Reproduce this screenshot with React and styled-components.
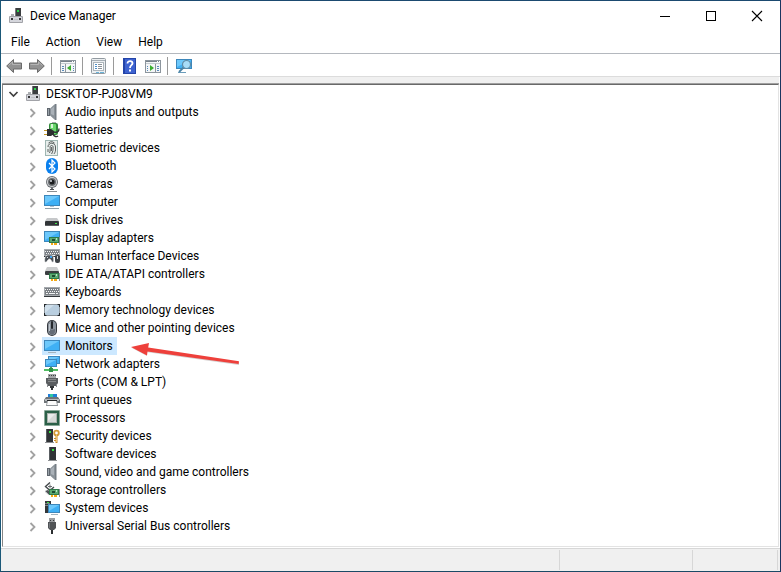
import React from 'react';
import styled, { createGlobalStyle } from 'styled-components';

const GlobalStyle = createGlobalStyle`
  * {
    box-sizing: border-box;
  }
  body {
    margin: 0;
    background: #fff;
  }
  body, button {
    font-family: Roboto, 'Open Sans', sans-serif;
    font-size: 12px;
    line-height: 18px;
    color: #000;
  }
`;

const Svg = ({ children, ...rest }) => (
  <svg width="16" height="16" viewBox="0 0 16 16" aria-hidden="true" {...rest}>
    {children}
  </svg>
);

/* shared pieces of the device icons */
const Screen = ({ x = 0, y = 2, w = 16, h = 11 }) => (
  <g>
    <rect x={x} y={y} width={w} height={h} fill="#3d87bb" />
    <rect x={x + 1} y={y + 1} width={w - 2} height={h - 2} fill="#3fb0f5" />
    <path d={`M${x + 1} ${y + 1}h${w - 2}L${x + 1} ${y + h - 2}z`} fill="#6cc8fb" />
  </g>
);

const Card = ({ x = 5, y = 7 }) => (
  <g>
    <rect x={x} y={y} width="10" height="6" fill="#2f7a49" />
    <rect x={x + 1} y={y + 1} width="8" height="4" fill="#5aa871" />
    <rect x={x + 3} y={y + 2} width="3" height="2" fill="#1c4d30" />
    <rect x={x + 7} y={y + 1} width="1" height="2" fill="#b9e6c4" />
    <rect x={x + 10} y={y} width="1" height="8" fill="#8b9298" />
    <path d={`M${x + 2} ${y + 6}h2v2h-2zM${x + 5} ${y + 6}h3v2h-3z`} fill="#f3a916" />
  </g>
);

const Keys = ({ y = 3, h = 9 }) => (
  <g>
    <rect x="0" y={y} width="16" height={h} fill="#a5a9ad" />
    <rect x="1" y={y + 1} width="14" height={h - 3} fill="#7b8085" />
    <path d={`M1 ${y + 2.5}h14M2 ${y + 4.5}h13`} stroke="#f2f3f4" strokeDasharray="1 1" />
    <path d={`M2 ${y + 6.5}h2m1 0h6m1 0h2`} stroke="#f2f3f4" />
    <rect x="0" y={y + h - 1} width="16" height="1" fill="#34383c" />
  </g>
);

const Tower = ({ x = 5, y = 1, w = 7, h = 13 }) => (
  <g>
    <rect x={x} y={y} width={w} height={h} fill="#303336" />
    <rect x={x} y={y} width="1" height={h} fill="#595d61" />
    <rect x={x + 3} y={y + 2} width="2" height="2" fill="#31e23f" />
    <rect x={x - 1} y={y + h} width={w + 2} height="1" fill="#8e9194" />
  </g>
);

const DeviceIcon = () => (
  <Svg>
    <rect x="7" y="0" width="6" height="9" fill="#3b3e40" />
    <rect x="7" y="0" width="1" height="9" fill="#77797b" />
    <rect x="9" y="2" width="2" height="2" fill="#2bd84a" />
    <path d="M3 6h3v3H3z" fill="#aeb1b4" />
    <rect x="1" y="8" width="14" height="7" rx="1" fill="#a2a3a8" />
    <rect x="2" y="9" width="12" height="5" fill="#d5d6dc" />
    <path d="M3 10h2v2H3zM11 10h2v2h-2z" fill="#353638" />
    <rect x="6" y="11" width="4" height="1" fill="#bfc0c5" />
  </Svg>
);

const AudioIcon = () => (
  <Svg>
    <path d="M3 4h3v8H3z" fill="#5f666e" />
    <path d="M4 5h1v6H4z" fill="#9aa2a9" />
    <path d="M6 4.500L11 0v16l-5-4.500z" fill="#8a9299" />
    <path d="M7 5l3-2.500v9L7 10z" fill="#aab1b8" />
    <path d="M11 0h1.500v16H11z" fill="#767e85" />
  </Svg>
);

const BatteryIcon = () => (
  <Svg>
    <rect x="8" y="0" width="4" height="2" fill="#a9adaf" />
    <rect x="5" y="1" width="9" height="12" rx="2" fill="#31893a" />
    <rect x="6" y="2" width="6" height="10" rx="1" fill="#6bd86d" />
    <rect x="7" y="2" width="2" height="4" fill="#d7f5d6" />
    <path d="M3 7h4l3 2v3l-3 2H3z" fill="#2c2e30" />
    <path d="M0 8.500h3M0 12.500h3" stroke="#c59827" />
    <path d="M10 10c4 1 5-1 5-3.500M9 12c1 3 4 3 5 2" fill="none" stroke="#303234" strokeWidth="1.300" />
  </Svg>
);

const BiometricIcon = () => (
  <Svg>
    <rect x="1" y="0" width="13" height="16" fill="#9fb6b2" />
    <rect x="2" y="1" width="11" height="14" fill="#e8eeec" />
    <g fill="none" stroke="#4a4e4d" strokeWidth=".9">
      <path d="M4 7c0-5 7.500-5 7.500 0v3c0 2-1 3-1.500 4" />
      <path d="M5.500 13c1-2 .6-4 .6-6 0-2 3-2 3 0 0 3 0 4-1.500 7" />
      <path d="M4 9v3M7.600 7v4" />
      <path d="M4.500 3l2-1.200h2l2 1.200" />
    </g>
  </Svg>
);

const BluetoothIcon = () => (
  <Svg>
    <rect x="2" y="0" width="12" height="16" rx="6" fill="#0a80ee" />
    <path d="M5 5l6 6-3 3V2l3 3-6 6" fill="none" stroke="#fff" strokeWidth="1.200" />
  </Svg>
);

const CameraIcon = () => (
  <Svg>
    <path d="M7 11h2v3H7z" fill="#6d7175" />
    <path d="M3 15.500h10" stroke="#8b8f92" />
    <path d="M6 13h4v1H6z" fill="#4d5155" />
    <circle cx="8" cy="6" r="6" fill="#6e7276" />
    <circle cx="8" cy="6" r="5" fill="#d4d6d8" />
    <circle cx="8" cy="6" r="4" fill="#6a6e72" />
    <circle cx="8" cy="6" r="2.500" fill="#1b1d1f" />
    <circle cx="7" cy="5" r="1" fill="#d8dee4" />
  </Svg>
);

const ComputerIcon = () => (
  <Svg>
    <Screen x={0} y={1} w={16} h={11} />
    <path d="M6 12h4v1H6z" fill="#b5c2ca" />
    <path d="M1 14h14v1H1z" fill="#8fa0aa" />
  </Svg>
);

const DiskIcon = () => (
  <Svg>
    <path d="M3 6h10l2 3H1z" fill="#c6c8ca" />
    <rect x="1" y="9" width="14" height="5" rx="1" fill="#313437" />
    <rect x="2" y="13" width="12" height="1" fill="#5b5e61" />
    <rect x="11" y="11" width="2" height="1" fill="#42e34c" />
  </Svg>
);

const DisplayIcon = () => (
  <Svg>
    <Screen x={0} y={1} w={16} h={11} />
    <Card x={5} y={7} />
  </Svg>
);

const HidIcon = () => (
  <Svg>
    <Keys y={1} h={8} />
    <path d="M1 14c-1-2 0-7 3-7h3c3 0 3 5 2.500 7-2 1-2-3-4-3s-2.500 4-4.500 3z" fill="#4d5359" stroke="#fff" strokeWidth=".5" />
    <path d="M3 9h1v1H3z" fill="#dfe3e6" />
    <path d="M6 8h2v2H6z" fill="#3fa3ee" />
    <rect x="11" y="7" width="5" height="8" rx="2" fill="#3d4247" />
    <path d="M13 8h1v3h-1z" fill="#cfd4d8" />
  </Svg>
);

const IdeIcon = () => (
  <Svg>
    <path d="M3 1h10l2 4H1z" fill="#cacccd" />
    <rect x="1" y="5" width="14" height="4" rx="1" fill="#3b3e41" />
    <Card x={5} y={7} />
  </Svg>
);

const KeyboardIcon = () => (
  <Svg>
    <Keys y={3} h={10} />
  </Svg>
);

const MemoryIcon = () => (
  <Svg>
    <rect x="0" y="2" width="16" height="12" rx="1" fill="#5e666d" />
    <path d="M3 2h10v12H3zM0 5h16v6H0z" fill="#8b949b" />
    <rect x="1" y="3" width="14" height="10" rx="1" fill="#b9cedf" />
    <path d="M2 3h8L1 11V4z" fill="#cfdfeb" />
    <path d="M0 2h2v1H1v2H0zM14 2h2v3h-1V3h-1zM0 14h2v-1H1v-2H0zM16 14h-2v-1h1v-2h1z" fill="#25292c" />
  </Svg>
);

const MouseIcon = () => (
  <Svg>
    <rect x="3" y="0" width="10" height="16" rx="5" fill="#34383e" />
    <rect x="4" y="1" width="8" height="14" rx="4" fill="#8b939c" />
    <path d="M5 9c2 1 4 1 6 0v2c0 5-6 5-6 0z" fill="#646c76" />
    <rect x="7" y="1" width="2" height="8" rx="1" fill="#24282c" />
    <rect x="5" y="4" width="1" height="7" fill="#c0c6cc" />
  </Svg>
);

const MonitorIcon = () => (
  <Svg>
    <Screen x={0} y={2} w={16} h={11} />
    <path d="M4 14.500h8" stroke="#a5b4bd" />
  </Svg>
);

const NetworkIcon = () => (
  <Svg>
    <Screen x={4} y={0} w={12} h={8} />
    <Screen x={1} y={3} w={12} h={8} />
    <path d="M6 11h2v2H6z" fill="#4aa35c" />
    <rect x="0" y="13" width="14" height="2" fill="#51bd62" />
    <rect x="5" y="12" width="4" height="4" fill="#2f9147" />
  </Svg>
);

const PortIcon = () => (
  <Svg>
    <rect x="4" y="0" width="8" height="4" fill="#a3a5a7" />
    <path d="M5 1.500h7" stroke="#3f4244" strokeDasharray="1 1" />
    <path d="M2 4h12v5l-2 3H4L2 9z" fill="#5a5d60" />
    <path d="M4 5.500h8M4 7.500h8" stroke="#85888a" />
    <path d="M6 12h4v2H6zM7 14h2v2H7z" fill="#333638" />
    <path d="M3.500 10v3M12.500 10v3" stroke="#888b8e" />
  </Svg>
);

const PrinterIcon = () => (
  <Svg>
    <path d="M4 2h9v4H4z" fill="#1f7fd6" />
    <path d="M6 2h3v3H6z" fill="#2fc7a2" />
    <path d="M2 5h12l2 3v3H0V8z" fill="#6f7478" />
    <path d="M1 7h14v2H1z" fill="#b6babd" />
    <path d="M3 8h10v2H3z" fill="#26292b" />
    <path d="M3 9h10l1 5H2z" fill="#8f9498" />
    <path d="M4 9h8l1 4H3z" fill="#fbfbfb" />
  </Svg>
);

const ProcessorIcon = () => (
  <Svg>
    <rect x=".5" y=".5" width="15" height="15" fill="#2c6249" stroke="#7ca18c" strokeDasharray="1 1" />
    <rect x="1" y="1" width="14" height="14" fill="#2b6048" />
    <rect x="3" y="3" width="10" height="10" fill="#a9b3ad" />
    <rect x="4" y="4" width="8" height="8" fill="#d6dad8" />
    <path d="M4 4h7l-7 7z" fill="#ebedec" />
  </Svg>
);

const SecurityIcon = () => (
  <Svg>
    <Tower x={2} y={1} w={7} h={13} />
    <circle cx="12.500" cy="5" r="2.300" fill="none" stroke="#d49a35" strokeWidth="1.800" />
    <path d="M11.500 7h2v8h-2zM10 10h2v1h-2zM10 12h2v1h-2z" fill="#c98d2b" />
    <path d="M12 7h1v7h-1z" fill="#f0c36d" />
  </Svg>
);

const SoftwareIcon = () => (
  <Svg>
    <Tower />
  </Svg>
);

const StorageIcon = () => (
  <Svg>
    <path d="M6 .5L1.500 4.500 6 8.500l4-3.500" fill="none" stroke="#44484b" strokeWidth="1.400" />
    <path d="M4 4.500h4M6 2.500v4" stroke="#6a6e71" />
    <path d="M1 9l3-1 4 3v2H5z" fill="#505457" />
    <path d="M1 9.500l4 3.500" stroke="#c0c3c5" />
    <Card x={5} y={7} />
  </Svg>
);

const SystemIcon = () => (
  <Svg>
    <rect x="1" y="1" width="6" height="12" fill="#34383b" />
    <path d="M1 3.500h5M1 5.500h5" stroke="#7c8286" />
    <rect x="3" y="2" width="2" height="1" fill="#38dd49" />
    <Screen x={4} y={4} w={12} h={9} />
    <path d="M7 14.500h7" stroke="#a1b3be" />
  </Svg>
);

const UsbIcon = () => (
  <Svg>
    <rect x="5" y="0" width="6" height="5" fill="#9a9da0" />
    <path d="M6 2h1v1H6zM9 2h1v1H9z" fill="#34373a" />
    <path d="M4 4h8v6l-2 2H6l-2-2z" fill="#505356" />
    <path d="M5 5h1v5H5z" fill="#73777a" />
    <path d="M7 12h2v4H7z" fill="#2b2e30" />
  </Svg>
);

/* toolbar drawings */
const ArrowIcon = ({ flip }) => (
  <Svg>
    <g transform={flip ? 'matrix(-1 0 0 1 16 0)' : undefined}>
      <path d="M.7 8L7.500 1.500V5h8v6h-8v3.500z" fill="#929292" stroke="#6b6b6b" />
      <path d="M2.500 7.500L6.500 4v2.500h8" fill="none" stroke="#b4b4b4" />
    </g>
  </Svg>
);

const PanelIcon = ({ flip }) => (
  <Svg>
    <rect x=".5" y="2.500" width="15" height="12" fill="#f4f6f7" stroke="#8c959d" />
    <path d="M1 3.500h14" stroke="#77818a" />
    <path d="M1 5.500h14" stroke="#c5cbd0" />
    <path d="M12 3.500h1M14 3.500h1" stroke="#fff" />
    <path d={flip ? 'M10.500 6v8' : 'M5.500 6v8'} stroke="#8c959d" />
    <path
      d={flip ? 'M12 8.500h2M12 10.500h2M12 12.500h2M2 8.500h1M2 10.500h1M2 12.500h1' : 'M2 8.500h2M2 10.500h2M2 12.500h2M13 8.500h1M13 10.500h1M13 12.500h1'}
      stroke="#5a8bbb"
    />
    <path d={flip ? 'M5 7v6l4-3z' : 'M11 7v6l-4-3z'} fill="#3aad2e" />
  </Svg>
);

const PropertiesIcon = () => (
  <Svg>
    <rect x=".5" y=".5" width="14" height="15" rx="1" fill="#eceff1" stroke="#929aa1" />
    <path d="M1 2.500h13" stroke="#a5aeb5" />
    <rect x="2.500" y="4.500" width="10" height="8" fill="#fff" stroke="#aeb6bc" />
    <path d="M4 6.500h2M4 8.500h2M4 10.500h2" stroke="#4e8fc9" />
    <path d="M7 6.500h4M7 8.500h4M7 10.500h4" stroke="#8b9298" />
    <path d="M5 14.500h3M9 14.500h4" stroke="#6ab3d9" />
  </Svg>
);

const HelpIcon = () => (
  <Svg>
    <rect x="1" y="0" width="13" height="16" fill="#2344a8" />
    <rect x="3" y="1" width="10" height="14" fill="#3d62d0" />
    <path d="M5.500 5.500c0-3.500 5.500-3 5 0-.3 1.800-2.500 1.800-2.500 4.500" fill="none" stroke="#fff" strokeWidth="1.800" />
    <rect x="7" y="11.500" width="2" height="2" fill="#fff" />
  </Svg>
);

const ScanIcon = () => (
  <Svg>
    <Screen x={0} y={1} w={16} h={10} />
    <path d="M2 14.500h8" stroke="#6b9cba" />
    <path d="M7.500 9.500L3 14" stroke="#4a83a5" strokeWidth="1.800" />
    <circle cx="10.500" cy="6.500" r="4" fill="#a7dcf8" stroke="#5f8ba5" strokeWidth="1.200" />
  </Svg>
);

const menus = ['File', 'Action', 'View', 'Help'];

const tools = [
  [
    { label: 'Back', icon: <ArrowIcon /> },
    { label: 'Forward', icon: <ArrowIcon flip /> },
  ],
  [{ label: 'Show/Hide Console Tree', icon: <PanelIcon /> }],
  [{ label: 'Properties', icon: <PropertiesIcon /> }],
  [
    { label: 'Help', icon: <HelpIcon /> },
    { label: 'Show/Hide Action Pane', icon: <PanelIcon flip /> },
  ],
  [{ label: 'Scan for hardware changes', icon: <ScanIcon /> }],
];

const devices = [
  { name: 'Audio inputs and outputs', icon: <AudioIcon /> },
  { name: 'Batteries', icon: <BatteryIcon /> },
  { name: 'Biometric devices', icon: <BiometricIcon /> },
  { name: 'Bluetooth', icon: <BluetoothIcon /> },
  { name: 'Cameras', icon: <CameraIcon /> },
  { name: 'Computer', icon: <ComputerIcon /> },
  { name: 'Disk drives', icon: <DiskIcon /> },
  { name: 'Display adapters', icon: <DisplayIcon /> },
  { name: 'Human Interface Devices', icon: <HidIcon /> },
  { name: 'IDE ATA/ATAPI controllers', icon: <IdeIcon /> },
  { name: 'Keyboards', icon: <KeyboardIcon /> },
  { name: 'Memory technology devices', icon: <MemoryIcon /> },
  { name: 'Mice and other pointing devices', icon: <MouseIcon /> },
  { name: 'Monitors', icon: <MonitorIcon />, selected: true },
  { name: 'Network adapters', icon: <NetworkIcon /> },
  { name: 'Ports (COM & LPT)', icon: <PortIcon /> },
  { name: 'Print queues', icon: <PrinterIcon /> },
  { name: 'Processors', icon: <ProcessorIcon /> },
  { name: 'Security devices', icon: <SecurityIcon /> },
  { name: 'Software devices', icon: <SoftwareIcon /> },
  { name: 'Sound, video and game controllers', icon: <AudioIcon /> },
  { name: 'Storage controllers', icon: <StorageIcon /> },
  { name: 'System devices', icon: <SystemIcon /> },
  { name: 'Universal Serial Bus controllers', icon: <UsbIcon /> },
];

const App = () => {
  return (
    <Window>
      <GlobalStyle />
      <TitleBar>
        <DeviceIcon />
        <Title>Device Manager</Title>
        <Control aria-label="Minimize">
          <svg width="12" height="12" viewBox="0 0 12 12">
            <path d="M1 6.500h10" stroke="#000" />
          </svg>
        </Control>
        <Control aria-label="Maximize">
          <svg width="12" height="12" viewBox="0 0 12 12">
            <rect x="1.500" y="1.500" width="9" height="9" fill="none" stroke="#000" />
          </svg>
        </Control>
        <Control aria-label="Close">
          <svg width="12" height="12" viewBox="0 0 12 12">
            <path d="M1 1l10 10M11 1L1 11" stroke="#000" strokeWidth="1.100" />
          </svg>
        </Control>
      </TitleBar>

      <MenuBar>
        {menus.map((menu) => (
          <MenuItem key={menu}>{menu}</MenuItem>
        ))}
      </MenuBar>

      <Toolbar role="toolbar">
        {tools.map((group) => (
          <ToolGroup key={group[0].label}>
            {group.map((tool) => (
              <ToolButton key={tool.label} aria-label={tool.label}>
                {tool.icon}
              </ToolButton>
            ))}
          </ToolGroup>
        ))}
      </Toolbar>

      <Tree>
        <Branch>
          <li>
            <Row>
              <Expander aria-label="Collapse DESKTOP-PJ08VM9" aria-expanded="true">
                <svg width="12" height="8" viewBox="0 0 12 8">
                  <path d="M1.500 2l4 4 4-4" fill="none" stroke="#404040" strokeWidth="1.700" />
                </svg>
              </Expander>
              <Label>
                <DeviceIcon />
                DESKTOP-PJ08VM9
              </Label>
            </Row>
            <Branch $nested>
              {devices.map((device) => (
                <li key={device.name}>
                  <Row>
                    <Expander aria-label={`Expand ${device.name}`} aria-expanded="false">
                      <svg width="8" height="12" viewBox="0 0 8 12">
                        <path d="M1.500 3l4 4-4 4" fill="none" stroke="#a2a2a2" strokeWidth="1.800" />
                      </svg>
                    </Expander>
                    <Label $selected={device.selected}>
                      {device.icon}
                      {device.name}
                      {device.selected && <Pointer />}
                    </Label>
                  </Row>
                </li>
              ))}
            </Branch>
          </li>
        </Branch>
      </Tree>

      <StatusBar>
        <StatusCell />
        <StatusCell $width="133px" />
        <StatusCell $width="85px" />
      </StatusBar>
    </Window>
  );
};

export default App;

const Pointer = () => (
  <PointerSvg width="112" height="24" viewBox="0 0 112 24" aria-hidden="true">
    <path d="M2 6l16-4-1 4.500 92 13.500v3L16 10l1 4z" fill="#a9a0a0" opacity=".5" />
    <path d="M1 5l18-4-.8 4.500L109 19.300l-.4 2.700L17.500 9.500l-.5 4z" fill="#ee403b" />
  </PointerSvg>
);

const PointerSvg = styled.svg`
  position: absolute;
  left: 88px;
  top: 5px;
`;

const Window = styled.div`
  display: flex;
  flex-direction: column;
  min-height: 100vh;
  background: #fff;
  border: 1px solid;
  border-color: #1b4a70 #1a3560 #1b4a66 #1b5878;
`;

const TitleBar = styled.header`
  display: flex;
  align-items: center;
  height: 30px;
  padding-left: 7px;
`;

const Title = styled.h1`
  flex: 1;
  margin: 0;
  padding-left: 6px;
  font-size: 12px;
  font-weight: 400;
`;

const Control = styled.button`
  display: flex;
  align-items: center;
  justify-content: center;
  width: 46px;
  height: 28px;
  padding: 0;
  border: none;
  background: none;
`;

const MenuBar = styled.nav`
  display: flex;
  height: 23px;
  padding-left: 2px;
  border-bottom: 1px solid #b4b8be;
`;

const MenuItem = styled.button`
  padding: 0 8px;
  border: none;
  background: none;
`;

const Toolbar = styled.div`
  display: flex;
  align-items: center;
  height: 23px;
  padding: 2px 0 0 2px;
  border-bottom: 1px solid #dcdcdc;
`;

const ToolGroup = styled.div`
  display: flex;
  & + & {
    margin-left: 2px;
    padding-left: 5px;
    border-left: 1px solid #9a9a9a;
  }
`;

const ToolButton = styled.button`
  display: flex;
  align-items: center;
  width: 23px;
  height: 18px;
  padding: 0 0 0 3px;
  border: none;
  background: none;
`;

const Tree = styled.main`
  flex: 1;
  padding-left: 3px;
  border: 1px solid;
  border-color: #696969 #e3e3e3 #e3e3e3 #868686;
  margin: 7px 1px 1px;
  box-shadow: 0 -1px #a0a0a0, 0 -7px #f0f0f0;
`;

const Branch = styled.ul`
  margin: 0;
  padding: 0 0 0 ${({ $nested }) => ($nested ? '19px' : '0')};
  list-style: none;
`;

const Row = styled.div`
  display: flex;
  height: 18px;
  gap: 1px;
`;

const Expander = styled.button`
  display: flex;
  align-items: center;
  justify-content: center;
  width: 16px;
  padding: 0;
  border: none;
  background: none;
`;

const Label = styled.span`
  position: relative;
  display: flex;
  align-items: center;
  gap: 5px;
  padding: 0 4px 0 2px;
  white-space: nowrap;
  background: ${({ $selected }) => ($selected ? '#cce8ff' : 'transparent')};
`;

const StatusBar = styled.footer`
  display: flex;
  height: 23px;
  padding: 1px 2px 1px 0;
  border-top: 1px solid #d7d7d7;
  background: #f0f0f0;
`;

const StatusCell = styled.div`
  flex: ${({ $width }) => ($width ? `0 0 ${$width}` : '1')};
  border-right: 1px solid #d7d7d7;
`;
